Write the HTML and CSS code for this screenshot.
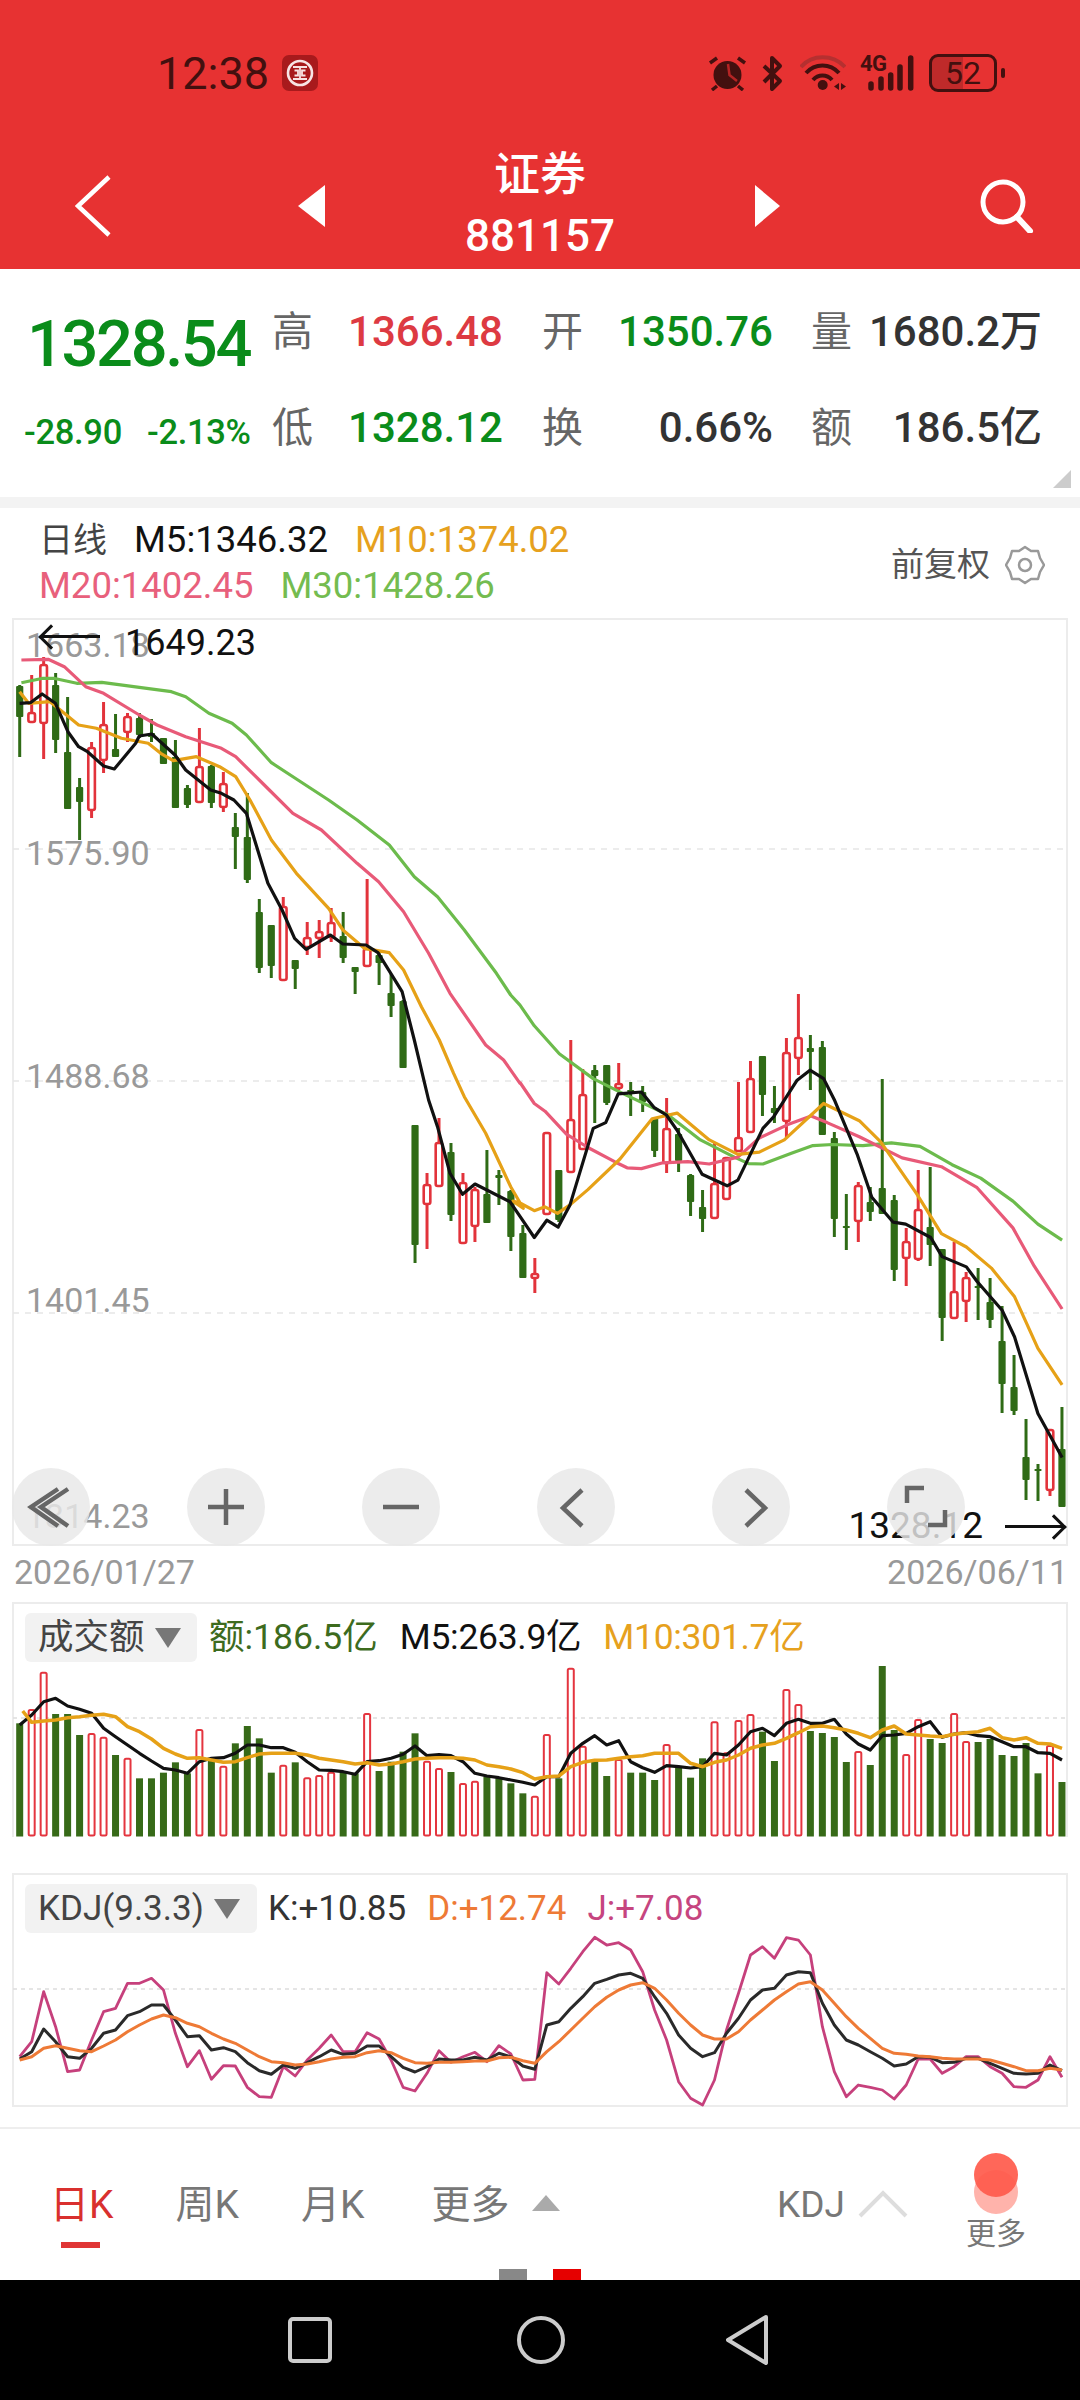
FILE: index.html
```html
<!DOCTYPE html>
<html lang="zh-CN">

<head>
    <meta charset="UTF-8" />
    <meta name="viewport" content="width=device-width, initial-scale=1.0" />
    <title>证券 881157</title>
    <link rel="stylesheet" href="styles.css">
</head>

<body>
    <!-- Header -->
    <header class="top">
        <div class="statusbar">
            <span class="clock">12:38</span>
            <svg class="bank" viewBox="0 0 36 36">
                <rect width="36" height="36" rx="7" fill="#a81a1c" />
                <circle cx="18" cy="18" r="12" fill="none" stroke="#f8e4e4" stroke-width="2.600" />
                <path d="M11 12H25M11 24H25M18 12V24M12.500 15.500H16V20.500H12.500M23.500 15.500H20V20.500H23.500" fill="none" stroke="#f8e4e4" stroke-width="1.800" />
            </svg>
            <div class="status-icons">
                <svg class="ic-alarm" viewBox="0 0 39 36">
                    <circle cx="19.500" cy="20" r="14" fill="#43100f" />
                    <path d="M20 9L21.500 20L29 26" fill="none" stroke="#b52424" stroke-width="2.500" />
                    <path d="M2 8L9 3M37 8L30 3M9 31L4 35M30 31L35 35" stroke="#43100f" stroke-width="3.500" />
                </svg>
                <svg class="ic-bt" viewBox="0 0 22 37">
                    <path d="M2 11L18 26L10 34V3L18 11L2 27" fill="none" stroke="#43100f" stroke-width="4" stroke-linejoin="round" />
                </svg>
                <svg class="ic-wifi" viewBox="0 0 46 36">
                    <path d="M1 12C12 -1 33 -1 45 12" fill="none" stroke="#b53030" stroke-width="4" />
                    <path d="M6 18C15 8 30 8 39 18M13 25C18 19 27 19 32 25" fill="none" stroke="#43100f" stroke-width="4" />
                    <circle cx="22.700" cy="30" r="5" fill="#43100f" />
                    <path d="M39 28L34 31.500L39 35ZM41 28L46 31.500L41 35Z" fill="#43100f" />
                </svg>
                <div class="ic-signal">
                    <span class="net">4G</span>
                    <svg viewBox="0 0 56 36">
                        <path d="M11 29V33M21 24V33M30.700 20V33M40 12V33M50.700 3V33" stroke="#43100f" stroke-width="5.500" stroke-linecap="round" />
                    </svg>
                </div>
                <div class="battery"><span>52</span></div>
            </div>
        </div>
        <nav class="titlebar">
            <svg class="back" viewBox="0 0 36 62">
                <path d="M34 2L3 31L34 60" fill="none" stroke="#fff" stroke-width="4.500" />
            </svg>
            <span class="tri tri-left"></span>
            <div class="title">
                <div class="title-name">证券</div>
                <div>881157</div>
            </div>
            <span class="tri tri-right"></span>
            <svg class="search" viewBox="0 0 54 54">
                <circle cx="23" cy="23" r="20" fill="none" stroke="#fff" stroke-width="5" />
                <path d="M37 38L50 52" stroke="#fff" stroke-width="6" stroke-linecap="round" />
            </svg>
        </nav>
    </header>

    <!-- Quote -->
    <section class="quote">
        <div class="price green">1328.54</div>
        <span class="label">高</span><span class="value red">1366.48</span>
        <span class="label wide">开</span><span class="value green">1350.76</span>
        <span class="label wide">量</span><span class="value dark">1680.2万</span>
        <div class="change green"><span>-28.90</span><span>-2.13%</span></div>
        <span class="label">低</span><span class="value green">1328.12</span>
        <span class="label wide">换</span><span class="value dark">0.66%</span>
        <span class="label wide">额</span><span class="value dark">186.5亿</span>
        <span class="corner"></span>
    </section>
    <div class="divider"></div>

    <!-- MA legend -->
    <section class="legend">
        <div class="legend-lines">
            <div class="legend-row"><span class="legend-name">日线</span><span class="black">M5:1346.32</span><span class="orange">M10:1374.02</span></div>
            <div class="legend-row"><span class="pink">M20:1402.45</span><span class="lime">M30:1428.26</span></div>
        </div>
        <div class="adjust">
            <span>前复权</span>
            <svg viewBox="0 0 40 40">
                <path d="M20 2L26 6L33 6L35 13L39 20L35 27L33 34L26 34L20 38L14 34L7 34L5 27L1 20L5 13L7 6L14 6Z" fill="none" stroke="#999" stroke-width="2.500" stroke-linejoin="round" />
                <circle cx="20" cy="20" r="6" fill="none" stroke="#999" stroke-width="2.500" />
            </svg>
        </div>
    </section>

    <!-- K line chart -->
    <section class="kline">
        <svg id="klineSvg" class="plot" viewBox="12 618 1056 929"></svg>
        <span class="axis axis-1">1663.18</span>
        <span class="axis axis-2">1575.90</span>
        <span class="axis axis-3">1488.68</span>
        <span class="axis axis-4">1401.45</span>
        <span class="axis axis-5">1314.23</span>
        <div class="mark mark-high"><i class="arrow arrow-left"></i><span>1649.23</span></div>
        <div class="mark mark-low"><span>1328.12</span><i class="arrow arrow-right"></i></div>
        <div class="chart-btns">
            <button><svg viewBox="0 0 78 78"><path d="M46 21L19 39L46 58M56 21L29 39L56 58" /></svg></button>
            <button><svg viewBox="0 0 78 78"><path d="M21 39H57M39 21V57" /></svg></button>
            <button><svg viewBox="0 0 78 78"><path d="M21 39H57" /></svg></button>
            <button><svg viewBox="0 0 78 78"><path d="M45 22L26 40L45 58" /></svg></button>
            <button><svg viewBox="0 0 78 78"><path d="M34 22L53 40L34 58" /></svg></button>
            <button><svg viewBox="0 0 78 78"><path d="M20 35V20H37M41 57H58V42" /></svg></button>
        </div>
    </section>
    <div class="dates"><span>2026/01/27</span><span>2026/06/11</span></div>

    <!-- Volume -->
    <section class="panel panel-vol">
        <svg id="volSvg" class="plot" viewBox="12 1602 1056 246"></svg>
        <div class="panel-head">
            <div class="pill pill-vol">成交额<i class="caret"></i></div>
            <span class="vol-green">额:186.5亿</span><span class="black">M5:263.9亿</span><span class="orange">M10:301.7亿</span>
        </div>
    </section>

    <!-- KDJ -->
    <section class="panel panel-kdj">
        <svg id="kdjSvg" class="plot" viewBox="12 1873 1056 243"></svg>
        <div class="panel-head">
            <div class="pill pill-kdj">KDJ(9.3.3)<i class="caret"></i></div>
            <span class="kdj-k">K:+10.85</span><span class="kdj-d">D:+12.74</span><span class="kdj-j">J:+7.08</span>
        </div>
    </section>

    <!-- Period tabs -->
    <section class="tabs">
        <div class="tab-row">
            <span class="tab active">日K</span>
            <span class="tab">周K</span>
            <span class="tab">月K</span>
            <span class="tab tab-more">更多</span>
            <i class="tab-up"></i>
            <span class="tab tab-kdj">KDJ</span>
            <svg class="tab-chevron" viewBox="0 0 50 28">
                <path d="M2 26L25 3L48 26" fill="none" stroke="#ddd" stroke-width="4" />
            </svg>
        </div>
        <div class="float-more">
            <div class="dots"><i></i><i></i></div>
            <span>更多</span>
        </div>
        <div class="pager"><i></i><i></i></div>
    </section>

    <!-- Android nav -->
    <footer class="navbar">
        <svg viewBox="0 0 44 46" class="nav-square"><rect x="2" y="2" width="40" height="42" rx="3" /></svg>
        <svg viewBox="0 0 48 48" class="nav-circle"><circle cx="24" cy="24" r="22" /></svg>
        <svg viewBox="0 0 42 50" class="nav-back"><path d="M40 2L2 25L40 48Z" /></svg>
    </footer>

    <script src="chart.js"></script>
</body>

</html>
```

FILE: styles.css
```css
* {
    box-sizing: border-box;
}

body {
    font-family: Roboto, "Noto Sans CJK SC", sans-serif;
    margin: 0;
    padding: 0;
    width: 1080px;
    height: 2400px;
    overflow: hidden;
    background: #fff;
    color: #333;
}

i {
    display: block;
}

.green { color: #0a8c1a; }
.red { color: #dd3a42; }
.dark { color: #333; }
.black { color: #111; }
.orange { color: #e6a11e; }
.pink { color: #e8607c; }
.lime { color: #74bc50; }
.vol-green { color: #3d6b1e; }
.kdj-k { color: #333; }
.kdj-d { color: #ee7a36; }
.kdj-j { color: #c6457f; }

/* header */
.top {
    height: 269px;
    background: #e73232;
}

.statusbar {
    height: 146px;
    display: flex;
    align-items: center;
    padding-left: 157px;
}

.clock {
    font-size: 45px;
    color: #43100f;
}

.bank {
    width: 36px;
    height: 36px;
    margin-left: 13px;
}

.status-icons {
    margin-left: auto;
    width: 372px;
    display: flex;
    align-items: center;
}

.ic-alarm {
    width: 39px;
    height: 36px;
}

.ic-bt {
    width: 22px;
    height: 37px;
    margin-left: 15px;
}

.ic-wifi {
    width: 46px;
    height: 36px;
    margin-left: 16px;
}

.ic-signal {
    position: relative;
    width: 56px;
    height: 36px;
    margin-left: 14px;
}

.ic-signal svg {
    display: block;
    width: 56px;
    height: 36px;
}

.net {
    position: absolute;
    left: 0;
    top: -3px;
    font-size: 22px;
    font-weight: 700;
    line-height: 24px;
    letter-spacing: -0.500px;
    color: #43100f;
}

.battery {
    position: relative;
    width: 68px;
    height: 38px;
    margin-left: 13px;
    border: 3px solid #43100f;
    border-radius: 9px;
    background: linear-gradient(90deg, #bf2a2a 50%, transparent 50%);
    display: flex;
    align-items: center;
    justify-content: center;
    font-size: 32px;
    color: #43100f;
}

.battery::after {
    content: "";
    position: absolute;
    right: -11px;
    top: 11px;
    width: 4px;
    height: 10px;
    border-radius: 2px;
    background: #43100f;
}

.titlebar {
    height: 123px;
    padding-bottom: 11px;
    display: grid;
    grid-template-columns: 298px 27px 430px 25px 300px;
    align-items: center;
    color: #fff;
}

.back {
    width: 36px;
    height: 62px;
    margin-left: 75px;
}

.tri {
    width: 0;
    height: 0;
    border-top: 21px solid transparent;
    border-bottom: 21px solid transparent;
}

.tri-left {
    border-right: 27px solid #fff;
}

.tri-right {
    border-left: 25px solid #fff;
}

.title {
    text-align: center;
    font-size: 44px;
    font-weight: 500;
    line-height: 60px;
}

.title-name {
    font-size: 46px;
    line-height: 56px;
    margin-bottom: 4px;
}

.search {
    width: 54px;
    height: 54px;
    margin-left: 200px;
}

/* quote */
.quote {
    position: relative;
    height: 228px;
    padding-top: 15px;
    display: grid;
    grid-template-columns: 272px 40px 191px 80px 190px 79px 190px;
    grid-template-rows: 96px 96px;
    align-items: center;
}

.price {
    font-size: 65px;
    font-weight: 500;
    letter-spacing: -2.400px;
    padding: 24px 0 0 27px;
}

.change {
    display: flex;
    gap: 25px;
    padding: 8px 0 0 24px;
    font-size: 34.500px;
    font-weight: 500;
    line-height: 48px;
    letter-spacing: -0.300px;
}

.label {
    font-size: 41px;
    color: #666;
    line-height: 48px;
}

.label.wide {
    text-align: right;
}

.value {
    font-size: 42px;
    font-weight: 500;
    line-height: 48px;
    text-align: right;
}

.corner {
    position: absolute;
    right: 9px;
    bottom: 9px;
    width: 18px;
    height: 18px;
    background: #ccc;
    clip-path: polygon(100% 0, 100% 100%, 0 100%);
}

.divider {
    height: 11px;
    background: #f3f3f3;
}

/* legend */
.legend {
    height: 110px;
    padding: 9px 35px 0 39px;
    display: flex;
    justify-content: space-between;
    font-size: 36.500px;
    line-height: 46px;
}

.legend-row {
    display: flex;
    gap: 27px;
}

.legend-name {
    font-size: 34px;
    color: #444;
}

.adjust {
    display: flex;
    align-items: center;
    gap: 15px;
    height: 96px;
    font-size: 33px;
    color: #555;
}

.adjust svg {
    width: 40px;
    height: 40px;
}

/* charts */
.plot {
    display: block;
    width: 100%;
    height: 100%;
}

.kline {
    position: relative;
    height: 929px;
    margin: 0 12px;
}

.axis {
    position: absolute;
    left: 14px;
    font-size: 34px;
    line-height: 40px;
    color: #999;
}

.axis-1 { top: 7px; }
.axis-2 { top: 215px; }
.axis-3 { top: 438px; }
.axis-4 { top: 662px; }
.axis-5 { top: 878px; }

.mark {
    position: absolute;
    display: flex;
    align-items: center;
    font-size: 36px;
    line-height: 40px;
    color: #111;
}

.mark-high {
    left: 30px;
    top: 5px;
    gap: 25px;
}

.mark-low {
    right: 5px;
    bottom: 1px;
    gap: 22px;
    font-size: 37px;
}

.arrow {
    position: relative;
    width: 58px;
    height: 3px;
    background: #111;
}

.arrow::after {
    content: "";
    position: absolute;
    top: -7px;
    width: 15px;
    height: 15px;
    border-top: 3px solid #111;
    border-left: 3px solid #111;
}

.arrow-left {
    margin-top: -14px;
}

.arrow-left::after {
    left: 0;
    transform: rotate(-45deg);
}

.arrow-right::after {
    right: 0;
    transform: rotate(135deg);
}

.chart-btns {
    position: absolute;
    left: 0;
    top: 850px;
    display: flex;
    gap: 97px;
}

.chart-btns button {
    width: 78px;
    height: 78px;
    padding: 0;
    border: none;
    border-radius: 50%;
    background: rgba(232, 232, 232, 0.82);
}

.chart-btns svg {
    display: block;
    width: 78px;
    height: 78px;
    fill: none;
    stroke: #666;
    stroke-width: 4.500;
}

.dates {
    height: 55px;
    padding: 0 12px 5px 14px;
    display: flex;
    justify-content: space-between;
    align-items: center;
    font-size: 34px;
    color: #999;
}

.panel {
    position: relative;
    margin: 0 12px;
}

.panel-vol {
    height: 246px;
    margin-bottom: 25px;
}

.panel-kdj {
    height: 243px;
    margin-bottom: 11px;
}

.panel-head {
    position: absolute;
    left: 13px;
    top: 11px;
    display: flex;
    align-items: center;
    gap: 22px;
    font-size: 35.500px;
    line-height: 49px;
}

.panel-kdj .panel-head {
    gap: 21px;
    font-size: 35px;
}

.panel-vol .panel-head .black,
.panel-vol .panel-head .orange {
    letter-spacing: -0.300px;
}

.pill {
    height: 49px;
    padding: 0 0 0 13px;
    display: flex;
    align-items: center;
    gap: 10px;
    border-radius: 6px;
    background: #f2f2f2;
    color: #444;
    margin-right: -10px;
}

.pill-vol {
    width: 172px;
}

.pill-kdj {
    width: 232px;
}

.caret {
    width: 0;
    height: 0;
    border-left: 13px solid transparent;
    border-right: 13px solid transparent;
    border-top: 20px solid #777;
}

/* tabs */
.tabs {
    position: relative;
    height: 153px;
    border-top: 2px solid #eee;
}

.tab-row {
    height: 140px;
    padding: 58px 172px 0 50px;
    display: flex;
    font-size: 39px;
    line-height: 36px;
    color: #777;
}

.tab {
    margin-right: 62px;
}

.tab.active {
    position: relative;
    color: #d9302e;
}

.tab.active::after {
    content: "";
    position: absolute;
    left: 11px;
    top: 55px;
    width: 39px;
    height: 6px;
    background: #e03535;
}

.tab-more {
    margin-left: 5px;
    margin-right: 23px;
}

.tab-up {
    width: 0;
    height: 0;
    margin-top: 8px;
    border-left: 14px solid transparent;
    border-right: 14px solid transparent;
    border-bottom: 16px solid #aaa;
}

.tab-kdj {
    margin: 0 0 0 auto;
    font-size: 37px;
}

.tab-chevron {
    width: 50px;
    height: 28px;
    margin: 3px 0 0 13px;
    filter: blur(0.600px);
}

.float-more {
    position: absolute;
    left: 966px;
    top: 24px;
    width: 60px;
    text-align: center;
    font-size: 30px;
    line-height: 30px;
    color: #777;
}

.dots {
    position: relative;
    height: 66px;
}

.dots i {
    position: absolute;
    left: 8px;
    width: 44px;
    height: 44px;
    border-radius: 50%;
}

.dots i:first-child {
    top: 17px;
    background: #ffb3ab;
}

.dots i:last-child {
    top: 0;
    background: rgba(255, 90, 75, 0.92);
}

.pager {
    height: 11px;
    display: flex;
    justify-content: center;
    gap: 26px;
}

.pager i {
    width: 28px;
    background: #888;
}

.pager i:last-child {
    background: #e60000;
}

/* system nav */
.navbar {
    height: 120px;
    background: #000;
    display: grid;
    grid-template-columns: 288px 44px 185px 48px 161px 42px;
    align-items: center;
}

.navbar svg {
    display: block;
    fill: none;
    stroke: #ccc;
    stroke-width: 4;
    stroke-linejoin: round;
}

.nav-square {
    grid-column: 2;
    width: 44px;
    height: 46px;
}

.nav-circle {
    grid-column: 4;
    width: 48px;
    height: 48px;
}

.nav-back {
    grid-column: 6;
    width: 42px;
    height: 50px;
}
```

FILE: chart.js
```js
const SVG_NS = "http://www.w3.org/2000/svg";
const RED = "#e2333b";
const GREEN = "#2f6b16";
const VOL_GREEN = "#376a18";
const FRAME = "#ececec";

function add(svg, tag, attrs) {
    const el = document.createElementNS(SVG_NS, tag);
    Object.keys(attrs).forEach((k) => el.setAttribute(k, attrs[k]));
    svg.appendChild(el);
    return el;
}

function line(svg, points, color, width) {
    add(svg, "polyline", {
        points: points.map((p) => p[0].toFixed(1) + "," + p[1].toFixed(1)).join(" "),
        fill: "none",
        stroke: color,
        "stroke-width": width,
        "stroke-linejoin": "round",
    });
}

function frame(svg, top, bottom, grid) {
    add(svg, "line", { x1: 12, x2: 1068, y1: top + 1, y2: top + 1, stroke: FRAME, "stroke-width": 2 });
    add(svg, "line", { x1: 13, x2: 13, y1: top, y2: bottom, stroke: FRAME, "stroke-width": 2 });
    add(svg, "line", { x1: 1067, x2: 1067, y1: top, y2: bottom, stroke: FRAME, "stroke-width": 2 });
    add(svg, "line", { x1: 13, x2: 1067, y1: grid, y2: grid, stroke: "#ddd", "stroke-width": 1.5, "stroke-dasharray": "4 4" });
}

const barX = (i) => 19.7 + 11.98 * i;

/* ---------- K line ---------- */
// [up?, high, bodyTop, bodyBottom, low]
const candles = [
    [0,685,686,717,757],[1,675,713,722,722],[1,657,665,723,759],[0,673,685,740,753],[0,697,752,809,809],
    [0,778,787,802,840],[1,742,748,810,818],[1,702,725,760,773],[0,714,749,757,757],[1,713,717,732,742],
    [0,713,718,735,738],[0,719,733,737,742],[0,738,738,764,764],[0,740,757,808,808],[0,785,788,805,808],
    [1,728,767,802,803],[0,765,766,803,808],[1,772,784,807,812],[0,813,827,837,869],[0,793,837,880,883],
    [0,899,912,968,973],[0,925,925,966,978],[1,897,907,980,980],[0,960,960,969,989],[1,922,938,947,955],
    [1,920,932,938,958],[1,908,923,937,942],[0,912,936,958,963],[0,967,967,972,994],[1,879,949,966,966],
    [0,950,955,963,985],[0,974,993,1006,1017],[0,1000,1001,1068,1068],[0,1125,1125,1245,1263],[1,1173,1185,1204,1249],
    [1,1118,1143,1186,1187],[0,1143,1152,1215,1221],[1,1173,1183,1243,1243],[1,1187,1190,1226,1242],[0,1150,1194,1223,1223],
    [0,1170,1175,1178,1205],[0,1190,1191,1237,1251],[0,1225,1233,1278,1278],[1,1258,1274,1278,1293],[1,1133,1133,1214,1214],
    [0,1170,1170,1220,1222],[1,1040,1120,1172,1172],[1,1069,1095,1149,1149],[0,1065,1070,1076,1123],[0,1065,1065,1103,1105],
    [1,1063,1084,1088,1090],[0,1082,1090,1092,1116],[0,1086,1092,1102,1112],[0,1117,1118,1151,1157],[1,1098,1129,1163,1173],
    [0,1128,1134,1161,1172],[0,1174,1175,1202,1216],[0,1190,1207,1219,1232],[1,1142,1184,1218,1218],[1,1157,1158,1199,1199],
    [1,1082,1138,1151,1151],[1,1061,1079,1132,1132],[0,1056,1056,1095,1116],[0,1086,1108,1113,1123],[1,1038,1053,1121,1137],
    [1,994,1038,1058,1075],[0,1035,1048,1052,1090],[0,1041,1047,1135,1135],[0,1132,1138,1219,1237],[0,1194,1226,1228,1250],
    [1,1182,1186,1221,1242],[0,1187,1202,1212,1221],[0,1079,1188,1214,1214],[0,1195,1200,1270,1281],[1,1228,1242,1258,1286],
    [1,1170,1210,1259,1261],[0,1167,1227,1245,1266],[0,1249,1249,1318,1341],[1,1242,1292,1318,1318],[1,1272,1278,1301,1322],
    [0,1268,1286,1288,1320],[0,1278,1302,1320,1328],[0,1306,1341,1384,1413],[0,1355,1387,1411,1415],[0,1419,1457,1480,1500],
    [0,1464,1469,1470,1501],[1,1430,1430,1490,1496],[0,1407,1449,1507,1507],
];

// traced pieces of each average: left half, right half
const leftPt = (p) => [p[0] / 2.8, 610 + p[1] / 3];
const midPt = (p) => [p[0] / 2.8, 1100 + p[1] / 3];
const rightPt = (p) => [520 + p[0] / 2.8, 960 + p[1] / 2.613];

const ma30 = [[60,218],[120,205],[150,205],[215,220],[285,217],[390,232],[480,245],[520,260],[585,310],[650,340],[690,375],[760,458],[830,507],[920,570],[1000,630],[1090,705],[1160,800],[1225,860],[1300,960],[1390,1090],[1430,1155]].map(leftPt)
    .concat([[0,118],[40,172],[110,245],[205,310],[290,350],[415,405],[505,470],[600,515],[640,532],[680,533],[760,505],[820,485],[875,482],[960,485],[1040,478],[1120,487],[1210,535],[1290,570],[1380,630],[1450,690],[1518,732]].map(rightPt));

const ma20 = [[60,150],[135,148],[180,170],[240,230],[290,250],[390,315],[440,345],[520,380],[620,415],[660,440],[740,525],[820,610],[900,660],[1000,760],[1060,815],[1130,905],[1200,1030],[1260,1150],[1360,1305],[1410,1350],[1456,1420]].map(leftPt)
    .concat([[0,320],[40,375],[70,395],[130,455],[190,490],[265,527],[300,543],[340,545],[400,530],[470,527],[530,533],[610,515],[670,465],[750,430],[815,408],[860,425],[950,462],[1070,517],[1180,540],[1280,595],[1380,700],[1440,800],[1518,912]].map(rightPt));

const ma10 = [[55,245],[80,280],[140,275],[180,310],[220,345],[270,355],[340,385],[415,400],[450,430],[485,452],[550,440],[615,470],[660,500],[700,570],[760,690],[830,790],[920,895],[960,960],[1020,1015],[1090,1028],[1130,1080],[1180,1190],[1230,1290],[1270,1390],[1300,1460]].map(leftPt)
    .concat([[1360,100],[1430,260],[1465,325]].map(midPt))
    .concat([[-20,630],[0,635],[40,655],[70,645],[105,662],[140,640],[190,600],[280,520],[370,415],[440,400],[530,470],[610,508],[670,502],[740,470],[850,375],[950,420],[1010,475],[1110,610],[1180,715],[1250,750],[1320,805],[1385,880],[1450,1015],[1518,1110]].map(rightPt));

const ma5 = [[55,280],[85,278],[118,252],[155,280],[190,365],[220,410],[245,425],[290,468],[320,477],[380,400],[390,378],[425,372],[490,435],[520,480],[590,540],[620,550],[655,570],[690,610],[750,820],[790,900],[825,985],[857,1018],[925,975],[960,1002],[1025,1005],[1058,1028],[1126,1145],[1160,1290],[1200,1470]].map(leftPt)
    .concat([[1225,80],[1260,220],[1295,283],[1330,252],[1428,305]].map(midPt))
    .concat([[-22,640],[0,670],[40,725],[75,680],[107,698],[140,640],[205,440],[240,425],[275,350],[340,345],[375,385],[410,405],[440,445],[510,560],[580,590],[610,575],[680,440],[710,410],[775,315],[812,288],[850,310],[880,365],[945,510],[985,620],[1045,685],[1080,690],[1150,725],[1182,775],[1250,802],[1280,840],[1350,915],[1385,985],[1450,1185],[1518,1300]].map(rightPt));

function drawKline(svg) {
    add(svg, "rect", { x: 13, y: 619, width: 1054, height: 926, fill: "none", stroke: FRAME, "stroke-width": 2 });
    [849, 1081, 1313].forEach((y) => {
        add(svg, "line", { x1: 13, x2: 1067, y1: y, y2: y, stroke: "#e6e6e6", "stroke-width": 1.5, "stroke-dasharray": "6 6" });
    });
    candles.forEach((c, i) => {
        const x = barX(i);
        const color = c[0] ? RED : GREEN;
        add(svg, "line", { x1: x, x2: x, y1: c[1], y2: c[2], stroke: color, "stroke-width": 3 });
        add(svg, "line", { x1: x, x2: x, y1: c[3], y2: c[4], stroke: color, "stroke-width": 3 });
        if (c[0]) {
            add(svg, "rect", { x: x - 3.3, y: c[2], width: 6.6, height: c[3] - c[2], rx: 2, fill: "#fff", stroke: color, "stroke-width": 2.6 });
        } else {
            add(svg, "rect", { x: x - 3.6, y: c[2], width: 7.2, height: Math.max(c[3] - c[2], 2), rx: 1, fill: color });
        }
    });
    line(svg, ma30, "#6cbb4c", 3.2);
    line(svg, ma20, "#e85a78", 3.2);
    line(svg, ma10, "#e6a117", 3.2);
    line(svg, ma5, "#111", 3.2);
}

/* ---------- volume ---------- */
const volTops = [400,360,248,372,372,435,432,443,495,506,565,565,548,517,550,420,510,530,460,408,445,548,527,517,565,558,548,548,550,372,543,515,485,430,515,537,546,582,575,560,565,580,610,620,435,565,236,470,512,558,510,548,548,570,465,530,563,505,397,490,393,375,425,513,300,345,423,429,441,516,486,525,228,420,495,390,447,459,372,456,456,447,495,498,459,550,468,576];
const volUp = [0,1,1,0,0,0,1,1,0,1,0,0,0,0,0,1,0,1,0,0,0,0,1,0,1,1,1,0,0,1,0,0,0,0,1,1,0,1,1,0,0,0,0,1,1,0,1,1,0,0,1,0,0,0,1,0,0,0,1,1,1,1,0,0,1,1,0,0,0,0,1,0,0,0,1,1,0,0,1,1,0,0,0,0,0,0,1,0];
const volBlack = [405,375,335,325,348,358,370,415,440,465,490,513,535,540,550,515,505,503,490,465,465,473,473,487,515,540,541,545,553,515,512,505,493,468,497,494,497,515,550,558,563,570,577,585,560,560,490,460,437,465,452,515,533,547,527,530,534,530,490,495,465,425,415,437,400,388,400,400,388,432,462,480,437,435,430,410,395,442,432,428,437,440,455,470,470,488,490,510];
const volOrange = [363,397,393,390,383,380,376,373,380,410,425,447,475,492,505,503,510,517,515,503,492,490,490,490,495,505,510,515,522,518,525,522,515,507,505,503,503,505,510,525,530,537,548,567,560,558,530,517,511,510,505,500,497,490,490,490,520,530,517,510,495,475,465,460,445,428,410,408,413,420,430,443,420,408,432,435,438,440,433,428,425,415,443,450,443,460,462,475];

function drawVolume(svg) {
    const toY = (v) => 1590 + v / 3;
    frame(svg, 1602, 1837, 1718);
    volTops.forEach((v, i) => {
        const x = barX(i);
        const top = toY(v);
        if (volUp[i]) {
            add(svg, "rect", { x: x - 3, y: top, width: 6, height: 1835.5 - top, rx: 1.5, fill: "#fff", stroke: "#e4353f", "stroke-width": 2 });
        } else {
            add(svg, "rect", { x: x - 3.5, y: top, width: 7, height: 1836.5 - top, fill: VOL_GREEN });
        }
    });
    line(svg, volBlack.map((v, i) => [barX(i), toY(v)]), "#111", 3.2);
    line(svg, volOrange.map((v, i) => [barX(i) + (i === 0 ? 3 : 0), toY(v)]), "#e6a117", 3.5);
}

/* ---------- KDJ ---------- */
const kdjJ = [590,545,395,500,635,630,540,455,445,370,370,355,390,520,620,572,658,617,618,682,710,712,620,648,600,565,525,575,575,518,537,600,682,693,640,572,607,590,577,605,557,582,660,658,338,372,325,275,232,255,248,270,335,450,540,665,715,735,660,510,400,285,260,295,233,240,285,500,635,710,675,682,690,717,675,597,597,640,620,590,590,620,640,680,682,660,590,652];
const kdjK = [597,575,507,545,590,595,565,520,510,467,455,435,435,480,530,527,570,563,575,608,632,643,615,625,608,590,570,583,580,558,558,590,622,636,620,597,600,600,592,600,580,590,618,628,495,485,445,410,370,358,345,340,355,410,460,525,565,590,578,520,475,420,390,385,345,335,338,430,495,540,555,575,595,618,612,590,592,608,607,595,595,610,625,640,642,640,615,632];
const kdjD = [600,590,565,557,565,572,575,558,540,515,495,477,465,473,490,500,520,537,550,570,590,605,608,615,612,605,597,592,590,578,572,578,595,608,610,607,607,605,603,603,593,592,602,610,575,545,510,475,440,412,390,375,368,385,420,460,495,525,537,537,515,480,450,420,395,372,365,390,430,470,505,535,565,580,583,588,590,595,597,597,597,600,610,620,632,632,625,630];

function drawKdj(svg) {
    const toPts = (arr) => arr.map((v, i) => [barX(i), 1860 + v / 3]);
    frame(svg, 1873, 2107, 1989);
    add(svg, "line", { x1: 12, x2: 1068, y1: 2106, y2: 2106, stroke: FRAME, "stroke-width": 2 });
    line(svg, toPts(kdjJ), "#c6407c", 2.8);
    line(svg, toPts(kdjK), "#2a2a2a", 3);
    line(svg, toPts(kdjD), "#ee7a36", 3);
}

drawKline(document.getElementById("klineSvg"));
drawVolume(document.getElementById("volSvg"));
drawKdj(document.getElementById("kdjSvg"));
```
